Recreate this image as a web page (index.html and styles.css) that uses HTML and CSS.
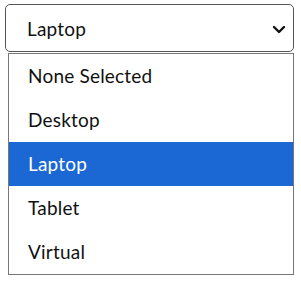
FILE: index.html
```html
<!DOCTYPE html>
<html lang="en">
<head>
  <meta charset="UTF-8">
  <title>Device select</title>
  <link rel="stylesheet" href="styles.css">
</head>
<body>
<div class="picker">
  <div class="select-box">
    <span class="select-value">Laptop</span>
    <svg class="chevron" width="14" height="9" viewBox="0 0 14 9">
      <path d="M2 2 L7 7 L12 2" fill="none" stroke="#111" stroke-width="2.4" stroke-linecap="round" stroke-linejoin="round"/>
    </svg>
  </div>
  <ul class="options">
    <li>None Selected</li>
    <li>Desktop</li>
    <li class="selected">Laptop</li>
    <li>Tablet</li>
    <li>Virtual</li>
  </ul>
</div>
</body>
</html>
```

FILE: styles.css
```css
body {
  margin: 0;
  padding: 0;
  background: #fff;
  font-family: Lato, 'Liberation Sans', sans-serif;
  color: #111;
}
.picker {
  width: 289px;
  padding: 4px 0 0 5px;
}
.select-box {
  height: 46px;
  border: 1px solid #555;
  border-radius: 5px;
  display: flex;
  align-items: center;
  justify-content: space-between;
  padding: 0 7px 0 21px;
  font-size: 19px;
  letter-spacing: 0.2px;
}
.chevron {
  margin-top: 2px;
}
.options {
  list-style: none;
  margin: 1px 0 0 3px;
  padding: 0;
  border: 1px solid #777;
  font-size: 19px;
  letter-spacing: 0.2px;
}
.options li {
  height: 44px;
  line-height: 44px;
  padding-left: 19px;
}
.options li.selected {
  background: #1b67d3;
  color: #fff;
}
```
